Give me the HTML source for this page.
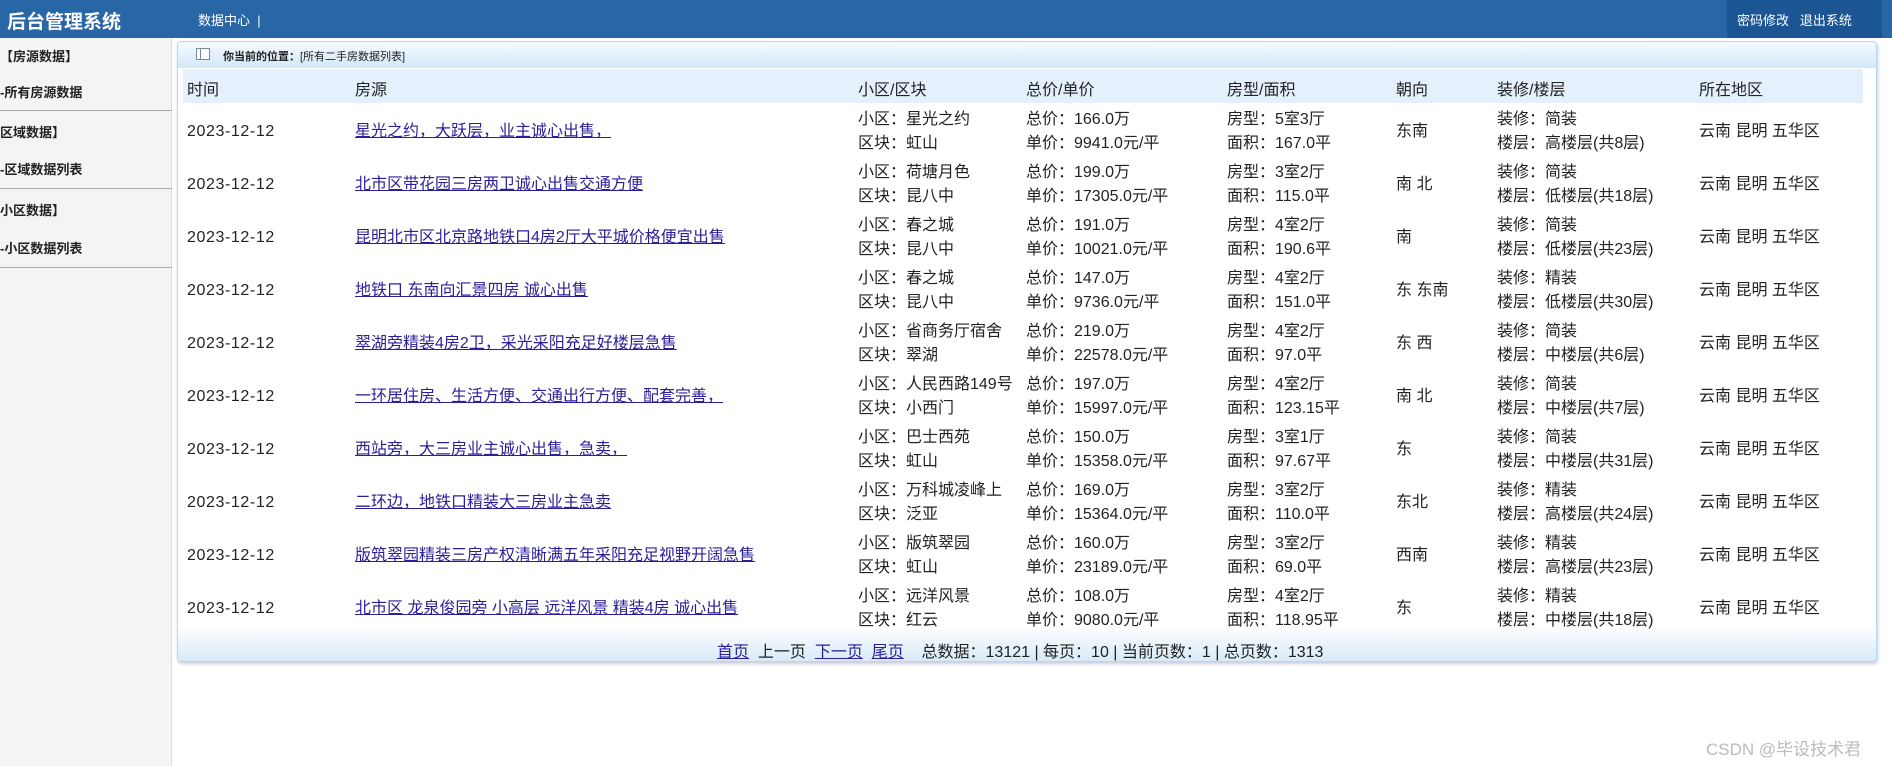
<!DOCTYPE html>
<html><head><meta charset="utf-8"><style>
*{margin:0;padding:0;box-sizing:border-box}
body{width:1892px;height:766px;overflow:hidden;background:#fff;font-family:"Liberation Sans","Noto Sans CJK SC",sans-serif;color:#222;position:relative}
.hd{position:absolute;left:0;top:0;width:1892px;height:38px;background:#2966a6}
.hd .t{position:absolute;left:7px;top:7px;color:#fff;font-weight:bold;font-size:19px}
.hd .m{position:absolute;left:198px;top:10px;color:#fff;font-size:13px}
.hd .r{position:absolute;left:1727px;top:0;width:155px;height:38px;background:#1c5594;color:#fff;font-size:13px;padding:10px 0 0 10px;word-spacing:0}
.sb{position:absolute;left:0;top:38px;width:172px;height:728px;background:#f4f4f4;border-right:1px solid #ddd}
.sb div{position:absolute;left:0;font-size:13px;font-weight:bold;color:#222}
.sb hr{position:absolute;left:0;width:172px;border:0;border-top:1px solid #aaa}
.pn{position:absolute;left:177px;top:41px;width:1700px;height:621px;border:1px solid #b8d6ee;border-radius:4px;box-shadow:1px 2px 3px #ccd;background:#fff;overflow:hidden}
.tb{position:absolute;left:0;top:0;width:100%;height:26px;background:linear-gradient(#f5faff,#d2e8f8)}
.tb span{position:absolute;left:45px;top:6px;font-size:11px}
.ico{position:absolute;left:18px;top:6px;width:14px;height:12px;border:1px solid #7a8a9a;background:#fff}
.ico:after{content:"";position:absolute;left:3px;top:0;width:1px;height:10px;background:#7a8a9a}
.th{position:absolute;left:5px;top:27px;width:1680px;height:34px;background:#e4f1fc}
.c{position:absolute;font-size:16px;white-space:nowrap;line-height:20px;height:20px;margin-top:3px}
.c *{line-height:20px}
.d{letter-spacing:0.6px}
.two,.two *{line-height:24px;height:auto}
a{color:#2a1e9a;text-decoration:underline}
.ft{position:absolute;left:0;bottom:0;width:100%;height:36px;background:linear-gradient(#fff,#d8eaf8)}
.pg{position:absolute;left:717px;top:643px;font-size:16px;white-space:nowrap;line-height:20px}
.wm{position:absolute;left:1706px;top:735px;font-size:17px;color:#bbb}
</style></head><body>
<div class="hd"><div class="t">后台管理系统</div><div class="m">数据中心 &nbsp;|</div><div class="r">密码修改 &nbsp;&nbsp;退出系统</div></div>
<div class="sb">
<div style="top:8px">【房源数据】</div>
<div style="top:44px">-所有房源数据</div>
<hr style="top:72px">
<div style="top:84px">区域数据】</div>
<div style="top:121px">-区域数据列表</div>
<hr style="top:150px">
<div style="top:162px">小区数据】</div>
<div style="top:200px">-小区数据列表</div>
<hr style="top:229px">
</div>
<div class="pn">
<div class="tb"><div class="ico"></div><span><b>你当前的位置：</b>[所有二手房数据列表]</span></div>
<div class="th"></div>
<div class="ft"></div>
</div>
<div class="c" style="left:187px;top:78px">时间</div>
<div class="c" style="left:355px;top:78px">房源</div>
<div class="c" style="left:858px;top:78px">小区/区块</div>
<div class="c" style="left:1026px;top:78px">总价/单价</div>
<div class="c" style="left:1227px;top:78px">房型/面积</div>
<div class="c" style="left:1396px;top:78px">朝向</div>
<div class="c" style="left:1497px;top:78px">装修/楼层</div>
<div class="c" style="left:1699px;top:78px">所在地区</div>

<div class="c d" style="left:187px;top:119px">2023-12-12</div><div class="c" style="left:355px;top:119px"><a>星光之约，大跃层，业主诚心出售，</a></div><div class="c two" style="left:858px;top:105px">小区：星光之约<br>区块：虹山</div><div class="c two" style="left:1026px;top:105px">总价：166.0万<br>单价：9941.0元/平</div><div class="c two" style="left:1227px;top:105px">房型：5室3厅<br>面积：167.0平</div><div class="c" style="left:1396px;top:119px">东南</div><div class="c two" style="left:1497px;top:105px">装修：简装<br>楼层：高楼层(共8层)</div><div class="c" style="left:1699px;top:119px">云南 昆明 五华区</div>

<div class="c d" style="left:187px;top:172px">2023-12-12</div><div class="c" style="left:355px;top:172px"><a>北市区带花园三房两卫诚心出售交通方便</a></div><div class="c two" style="left:858px;top:158px">小区：荷塘月色<br>区块：昆八中</div><div class="c two" style="left:1026px;top:158px">总价：199.0万<br>单价：17305.0元/平</div><div class="c two" style="left:1227px;top:158px">房型：3室2厅<br>面积：115.0平</div><div class="c" style="left:1396px;top:172px">南 北</div><div class="c two" style="left:1497px;top:158px">装修：简装<br>楼层：低楼层(共18层)</div><div class="c" style="left:1699px;top:172px">云南 昆明 五华区</div>

<div class="c d" style="left:187px;top:225px">2023-12-12</div><div class="c" style="left:355px;top:225px"><a>昆明北市区北京路地铁口4房2厅大平城价格便宜出售</a></div><div class="c two" style="left:858px;top:211px">小区：春之城<br>区块：昆八中</div><div class="c two" style="left:1026px;top:211px">总价：191.0万<br>单价：10021.0元/平</div><div class="c two" style="left:1227px;top:211px">房型：4室2厅<br>面积：190.6平</div><div class="c" style="left:1396px;top:225px">南</div><div class="c two" style="left:1497px;top:211px">装修：简装<br>楼层：低楼层(共23层)</div><div class="c" style="left:1699px;top:225px">云南 昆明 五华区</div>

<div class="c d" style="left:187px;top:278px">2023-12-12</div><div class="c" style="left:355px;top:278px"><a>地铁口 东南向汇景四房 诚心出售</a></div><div class="c two" style="left:858px;top:264px">小区：春之城<br>区块：昆八中</div><div class="c two" style="left:1026px;top:264px">总价：147.0万<br>单价：9736.0元/平</div><div class="c two" style="left:1227px;top:264px">房型：4室2厅<br>面积：151.0平</div><div class="c" style="left:1396px;top:278px">东 东南</div><div class="c two" style="left:1497px;top:264px">装修：精装<br>楼层：低楼层(共30层)</div><div class="c" style="left:1699px;top:278px">云南 昆明 五华区</div>

<div class="c d" style="left:187px;top:331px">2023-12-12</div><div class="c" style="left:355px;top:331px"><a>翠湖旁精装4房2卫，采光采阳充足好楼层急售</a></div><div class="c two" style="left:858px;top:317px">小区：省商务厅宿舍<br>区块：翠湖</div><div class="c two" style="left:1026px;top:317px">总价：219.0万<br>单价：22578.0元/平</div><div class="c two" style="left:1227px;top:317px">房型：4室2厅<br>面积：97.0平</div><div class="c" style="left:1396px;top:331px">东 西</div><div class="c two" style="left:1497px;top:317px">装修：简装<br>楼层：中楼层(共6层)</div><div class="c" style="left:1699px;top:331px">云南 昆明 五华区</div>

<div class="c d" style="left:187px;top:384px">2023-12-12</div><div class="c" style="left:355px;top:384px"><a>一环居住房、生活方便、交通出行方便、配套完善，</a></div><div class="c two" style="left:858px;top:370px">小区：人民西路149号<br>区块：小西门</div><div class="c two" style="left:1026px;top:370px">总价：197.0万<br>单价：15997.0元/平</div><div class="c two" style="left:1227px;top:370px">房型：4室2厅<br>面积：123.15平</div><div class="c" style="left:1396px;top:384px">南 北</div><div class="c two" style="left:1497px;top:370px">装修：简装<br>楼层：中楼层(共7层)</div><div class="c" style="left:1699px;top:384px">云南 昆明 五华区</div>

<div class="c d" style="left:187px;top:437px">2023-12-12</div><div class="c" style="left:355px;top:437px"><a>西站旁，大三房业主诚心出售，急卖，</a></div><div class="c two" style="left:858px;top:423px">小区：巴士西苑<br>区块：虹山</div><div class="c two" style="left:1026px;top:423px">总价：150.0万<br>单价：15358.0元/平</div><div class="c two" style="left:1227px;top:423px">房型：3室1厅<br>面积：97.67平</div><div class="c" style="left:1396px;top:437px">东</div><div class="c two" style="left:1497px;top:423px">装修：简装<br>楼层：中楼层(共31层)</div><div class="c" style="left:1699px;top:437px">云南 昆明 五华区</div>

<div class="c d" style="left:187px;top:490px">2023-12-12</div><div class="c" style="left:355px;top:490px"><a>二环边，地铁口精装大三房业主急卖</a></div><div class="c two" style="left:858px;top:476px">小区：万科城凌峰上<br>区块：泛亚</div><div class="c two" style="left:1026px;top:476px">总价：169.0万<br>单价：15364.0元/平</div><div class="c two" style="left:1227px;top:476px">房型：3室2厅<br>面积：110.0平</div><div class="c" style="left:1396px;top:490px">东北</div><div class="c two" style="left:1497px;top:476px">装修：精装<br>楼层：高楼层(共24层)</div><div class="c" style="left:1699px;top:490px">云南 昆明 五华区</div>

<div class="c d" style="left:187px;top:543px">2023-12-12</div><div class="c" style="left:355px;top:543px"><a>版筑翠园精装三房产权清晰满五年采阳充足视野开阔急售</a></div><div class="c two" style="left:858px;top:529px">小区：版筑翠园<br>区块：虹山</div><div class="c two" style="left:1026px;top:529px">总价：160.0万<br>单价：23189.0元/平</div><div class="c two" style="left:1227px;top:529px">房型：3室2厅<br>面积：69.0平</div><div class="c" style="left:1396px;top:543px">西南</div><div class="c two" style="left:1497px;top:529px">装修：精装<br>楼层：高楼层(共23层)</div><div class="c" style="left:1699px;top:543px">云南 昆明 五华区</div>

<div class="c d" style="left:187px;top:596px">2023-12-12</div><div class="c" style="left:355px;top:596px"><a>北市区 龙泉俊园旁 小高层 远洋风景 精装4房 诚心出售</a></div><div class="c two" style="left:858px;top:582px">小区：远洋风景<br>区块：红云</div><div class="c two" style="left:1026px;top:582px">总价：108.0万<br>单价：9080.0元/平</div><div class="c two" style="left:1227px;top:582px">房型：4室2厅<br>面积：118.95平</div><div class="c" style="left:1396px;top:596px">东</div><div class="c two" style="left:1497px;top:582px">装修：精装<br>楼层：中楼层(共18层)</div><div class="c" style="left:1699px;top:596px">云南 昆明 五华区</div>

<div class="pg"><a>首页</a>&nbsp; 上一页 &nbsp;<a>下一页</a>&nbsp; <a>尾页</a> &nbsp;&nbsp; 总数据：13121 | 每页：10 | 当前页数：1 | 总页数：1313</div>
<div class="wm">CSDN @毕设技术君</div>
</body></html>
